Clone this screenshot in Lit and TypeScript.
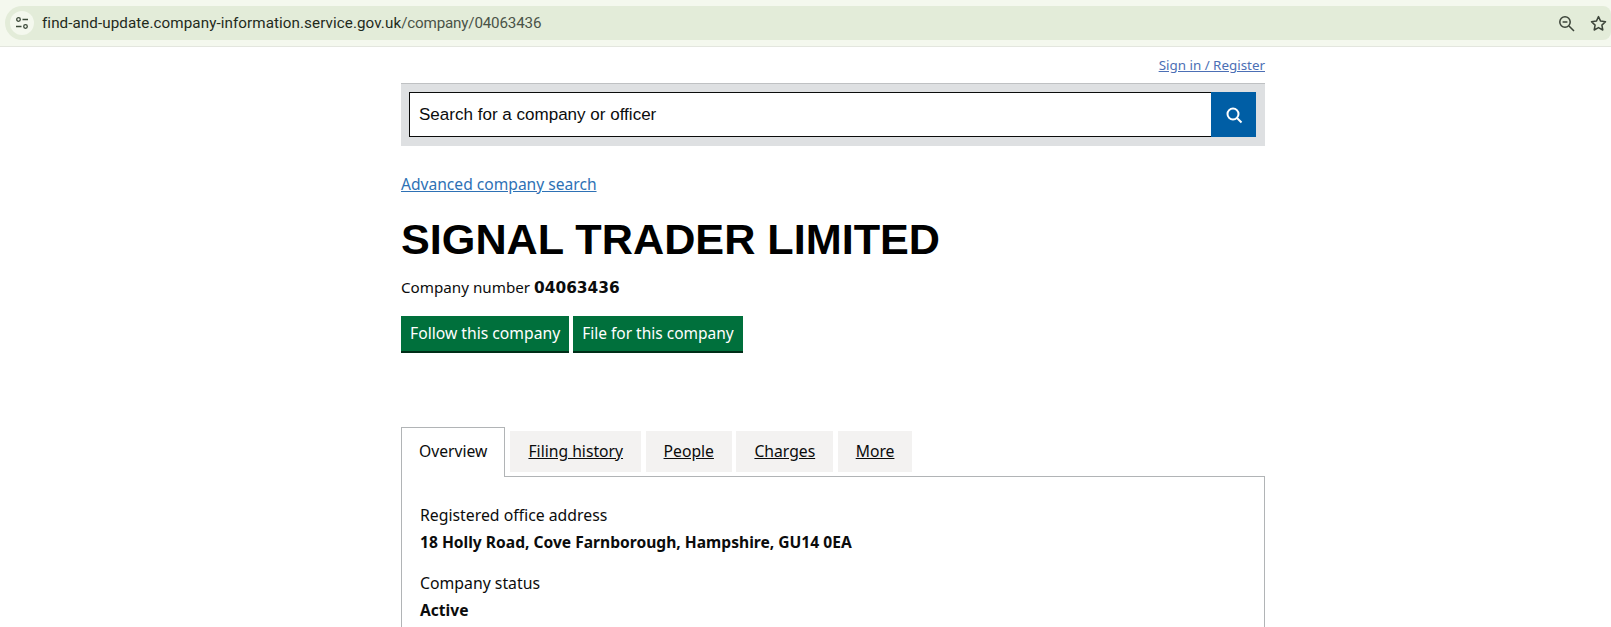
import { LitElement, html, css } from "lit";
import { customElement } from "lit/decorators.js";

@customElement("app-root")
export class AppRoot extends LitElement {
  static styles = css`
    :host { display: block; height: 627px; overflow: hidden; background: #fff; font-family: "Noto Sans", sans-serif; color: #0b0c0c; }
    .chrome { height: 47px; box-sizing: border-box; background: #f4f8ee; border-bottom: 1px solid #e3e6de; padding: 6px 0 0 5px; }
    .omni { height: 34px; background: #e3ecd9; border-radius: 17px 8px 8px 17px; display: flex; align-items: center; padding: 0 4px 0 5px; }
    .tune { width: 24px; height: 24px; border-radius: 50%; background: #f4f8ee; display: flex; align-items: center; justify-content: center; margin-right: 8px; }
    .url { font: 15.2px "Roboto", sans-serif; letter-spacing: 0.08px; color: #1f2a1c; flex: 1; }
    .url span { color: #4a5347; letter-spacing: -0.18px; }
    .tools { display: flex; gap: 15px; align-items: center; }
    .wrap { width: 864px; margin-left: 401px; }
    .signin { display: flex; justify-content: flex-end; height: 36px; box-sizing: border-box; padding-top: 9px; font-size: 13.4px; line-height: 18px; }
    .signin a { color: #4c6fb5; text-decoration: underline; }
    .search { height: 63px; box-sizing: border-box; background: #dee0e2; border-top: 1px solid #bfc1c3; padding: 8px 9px 0 8px; display: flex; align-items: flex-start; }
    .input { flex: 1; height: 45px; box-sizing: border-box; border: 1px solid #0b0c0c; border-right: 0; background: #fff; font: 17.05px/43px "Liberation Sans", sans-serif; padding-left: 9px; color: #0b0c0c; }
    .btn { width: 45px; height: 45px; background: #005ea5; display: flex; align-items: center; justify-content: center; }
    .adv { margin-top: 27px; font-size: 15.6px; line-height: 22px; }
    .adv a { color: #2e71b5; text-decoration: underline; }
    h1 { margin: 17px 0 0; font: bold 43.2px/55px "Liberation Sans", sans-serif; color: #000; }
    .num { margin-top: 9px; font-size: 15.2px; line-height: 22px; }
    .num b { font: bold 15.4px "DejaVu Sans", sans-serif; }
    .actions { display: flex; gap: 4px; margin-top: 18px; }
    .act { background: #00703c; color: #fff; height: 37px; box-sizing: border-box; border-bottom: 2px solid #002d18; padding: 0 9px; font-size: 15.7px; line-height: 35px; }
    .act.b { font-size: 15.5px; }
    .tabs { display: flex; align-items: flex-end; gap: 4.5px; margin-top: 74px; height: 49px; box-sizing: border-box; position: relative; z-index: 1; }
    .tab { height: 41px; margin-bottom: 4px; background: #f3f2f1; padding: 0 18px; font-size: 15.7px; line-height: 41px; color: #0b0c0c; text-decoration: underline; box-sizing: border-box; }
    .tab.on { height: 50px; margin-bottom: -1px; margin-right: 0.5px; background: #fff; border: 1px solid #b1b4b6; border-bottom: 0; text-decoration: none; line-height: 47px; padding: 0 17px; }
    .panel { border: 1px solid #b1b4b6; height: 300px; box-sizing: border-box; padding: 27px 18px 0 18px; }
    .lab { font-size: 15.8px; line-height: 22px; }
    .val { font-size: 15.6px; line-height: 22px; font-weight: 700; margin-top: 5px; }
    .val.s { margin-bottom: 19px; }
  `;
  render() {
    return html`
      <div class="chrome">
        <div class="omni">
          <div class="tune"><svg width="16" height="16" viewBox="0 0 16 16" fill="none" stroke="#3c4a3a" stroke-width="1.3"><circle cx="4.5" cy="4.5" r="1.8"/><path d="M8.5 4.5H14M2 11.5H7.5"/><circle cx="11.5" cy="11.5" r="1.8"/></svg></div>
          <div class="url">find-and-update.company-information.service.gov.uk<span>/company/04063436</span></div>
          <div class="tools">
            <svg width="17" height="17" viewBox="0 0 17 17" fill="none" stroke="#3c4439" stroke-width="1.5"><circle cx="7" cy="7" r="5.2"/><path d="M4.6 7h4.8M11 11l5 5"/></svg>
            <svg width="17" height="17" viewBox="0 0 17 17" fill="none" stroke="#3c4439" stroke-width="1.5" stroke-linejoin="round"><path d="M8.5 1.6l2.1 4.5 4.9.6-3.6 3.4.9 4.9-4.3-2.4-4.3 2.4.9-4.9L1.5 6.7l4.9-.6z"/></svg>
          </div>
        </div>
      </div>
      <div class="wrap">
        <div class="signin"><a>Sign in / Register</a></div>
        <div class="search">
          <div class="input">Search for a company or officer</div>
          <div class="btn"><svg width="18" height="18" viewBox="0 0 18 18" fill="none" stroke="#fff" stroke-width="2"><circle cx="8" cy="8" r="5.5"/><path d="M12 12l4.5 4.5"/></svg></div>
        </div>
        <div class="adv"><a>Advanced company search</a></div>
        <h1>SIGNAL TRADER LIMITED</h1>
        <div class="num">Company number <b>04063436</b></div>
        <div class="actions"><div class="act">Follow this company</div><div class="act b">File for this company</div></div>
        <div class="tabs">
          <div class="tab on">Overview</div>
          <div class="tab">Filing history</div>
          <div class="tab">People</div>
          <div class="tab">Charges</div>
          <div class="tab">More</div>
        </div>
        <div class="panel">
          <div class="lab">Registered office address</div>
          <div class="val s">18 Holly Road, Cove Farnborough, Hampshire, GU14 0EA</div>
          <div class="lab">Company status</div>
          <div class="val">Active</div>
        </div>
      </div>
    `;
  }
}
